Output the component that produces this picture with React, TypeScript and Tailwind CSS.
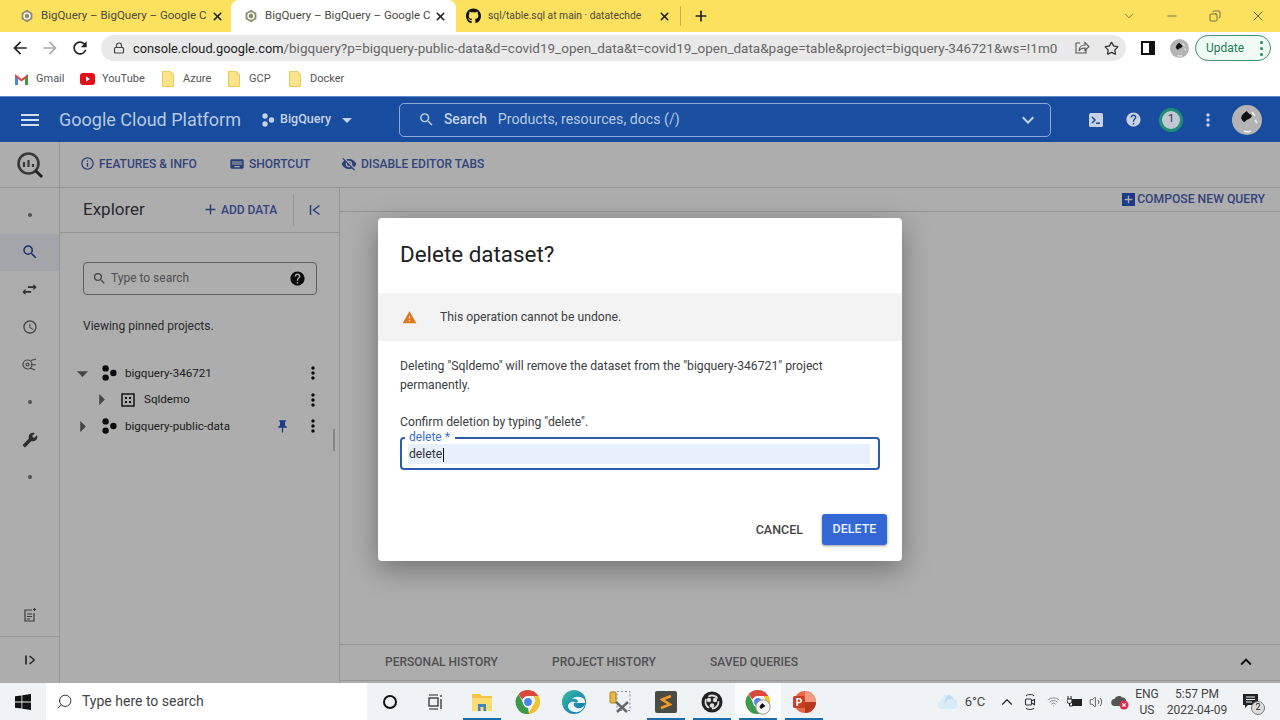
import type { ReactNode } from 'react'
import { ChevronDown, Minus, Plus, X, Copy, Search, Star, Lock, Volume2, Wifi } from 'lucide-react'
import { FaGithub } from 'react-icons/fa'
import {
  MdAdd,
  MdArrowBack,
  MdArrowDropDown,
  MdArrowForward,
  MdArrowRight,
  MdBuild,
  MdExpandLess,
  MdExpandMore,
  MdHelp,
  MdInfoOutline,
  MdKeyboard,
  MdMenu,
  MdMoreVert,
  MdPushPin,
  MdRefresh,
  MdSchedule,
  MdSearch,
  MdSwapHoriz,
  MdVisibilityOff,
  MdWarning,
} from 'react-icons/md'

function GcpFavicon() {
  return (
    <svg width="14" height="14" viewBox="0 0 14 14" className="shrink-0">
      <path d="M7 .8 12.4 3.9v6.2L7 13.2 1.6 10.1V3.9z" fill="#8a8a70" />
      <circle cx="7" cy="7" r="3" fill="none" stroke="#f4f4e8" strokeWidth="1.6" />
    </svg>
  )
}

function Tab({ active, icon, title, className }: { active?: boolean; icon: ReactNode; title: string; className: string }) {
  return (
    <div className={`flex h-8 items-center ${className} ${active ? 'rounded-t-lg bg-white' : ''}`}>
      <span className="flex w-[15px] justify-center">{icon}</span>
      <span className="ml-[7px] flex-1 whitespace-nowrap text-[#4a4a40]">{title}</span>
      <X size={13} strokeWidth={3} className="shrink-0 text-[#222]" />
    </div>
  )
}

function FolderIcon() {
  return (
    <svg width="12" height="16" viewBox="0 0 12 16" className="shrink-0">
      <path d="M.5.5h8l3 3v12H.5z" fill="#fbe38b" stroke="#e9c95a" />
      <path d="M8.5.5v3h3" fill="#f3d56f" />
    </svg>
  )
}

function Bookmark({ icon, label, width }: { icon: ReactNode; label: string; width: string }) {
  return (
    <div className={`flex items-center ${width}`}>
      <span className="flex w-[16px] justify-center">{icon}</span>
      <span className="ml-[7px] text-[11px] text-[#555]">{label}</span>
    </div>
  )
}

function Avatar({ size }: { size: number }) {
  return (
    <svg width={size} height={size} viewBox="0 0 30 30" className="shrink-0">
      <circle cx="15" cy="15" r="15" fill="#b4b4b4" />
      <path d="M9 13c1-4 4-6 6-7 1 3 4 3 5 5-2 4-6 3-7 6-2 0-3-2-4-4z" fill="#111" />
      <path d="M20 7l3 4M23 15l2 3M12 26c2 1 5 1 7 0" stroke="#eee" strokeWidth="1.6" fill="none" />
    </svg>
  )
}

function ToolbarLink({ icon, label, width }: { icon: ReactNode; label: string; width: string }) {
  return (
    <div className={`flex items-center ${width}`}>
      {icon}
      <span className="ml-[4px] whitespace-nowrap text-[12px] font-medium text-[#4a64b8]">{label}</span>
    </div>
  )
}

function RailIcon({ children, active }: { children: ReactNode; active?: boolean }) {
  return (
    <div className={`flex h-[37.5px] w-full items-center justify-center ${active ? 'bg-[#f0f4fb]' : ''}`}>{children}</div>
  )
}

function Dot() {
  return <span className="h-[4px] w-[4px] rounded-full bg-[#777]" />
}

function ProjectIcon() {
  return (
    <svg width="16" height="16" viewBox="0 0 16 16" className="shrink-0">
      <circle cx="4.6" cy="3.4" r="3.2" fill="#111" />
      <circle cx="4.6" cy="12.6" r="3.2" fill="#111" />
      <circle cx="12.4" cy="8" r="3.2" fill="#111" />
    </svg>
  )
}

function DatasetIcon() {
  return (
    <svg width="14" height="14" viewBox="0 0 14 14" className="shrink-0">
      <rect x="1" y="1" width="12" height="12" fill="none" stroke="#111" strokeWidth="1.4" />
      <rect x="4" y="4" width="2" height="2" fill="#111" />
      <rect x="8" y="4" width="2" height="2" fill="#111" />
      <rect x="4" y="8" width="2" height="2" fill="#111" />
      <rect x="8" y="8" width="2" height="2" fill="#111" />
    </svg>
  )
}

function TreeRow({ indent, open, icon, label, pinned }: { indent: string; open?: boolean; icon: ReactNode; label: string; pinned?: boolean }) {
  return (
    <div className={`flex h-[26.5px] items-center pr-[17px] ${indent}`}>
      <span className="flex w-[18px] justify-center text-[#666]">
        {open ? <MdArrowDropDown size={27} className="shrink-0" /> : <MdArrowRight size={27} className="shrink-0" />}
      </span>
      <span className="ml-[10px] flex w-[16px] justify-center">{icon}</span>
      <span className="ml-[8px] flex-1 text-[11.600px] text-[#2b2b2b]">{label}</span>
      {pinned && <MdPushPin size={15} className="mr-[13px] text-[#2a56c6]" />}
      <MdMoreVert size={20} className="-mr-[1px] text-[#111]" />
    </div>
  )
}

function TaskCell({ children, active, on }: { children: ReactNode; active?: boolean; on?: boolean }) {
  return (
    <div className={`relative flex h-full w-[46px] items-center justify-center ${active ? 'bg-[#fbfcfd]' : ''}`}>
      {children}
      {on && <span className="absolute bottom-0 left-[4px] right-[4px] h-[2px] bg-[#1b6ca8]" />}
    </div>
  )
}

function ChromeLogo({ user }: { user?: boolean }) {
  return (
    <svg width="26" height="26" viewBox="0 0 26 26">
      <path d="M13 1a12 12 0 0 1 10.4 6H13a6 6 0 0 0-5.6 3.8L3.6 5.2A12 12 0 0 1 13 1z" fill="#d9483b" />
      <path d="M23.4 7A12 12 0 0 1 13 25l5.2-9a6 6 0 0 0 0-9z" fill="#f2c230" />
      <path d="M3.6 5.2 8.8 15a5 5 0 0 0 4.2 4l1 6A12 12 0 0 1 3.6 5.2z" fill="#3c9a4b" />
      <circle cx="13" cy="13" r="4.6" fill="#4a85e8" stroke="#fff" strokeWidth="1.3" />
      {user && (
        <g>
          <circle cx="18" cy="18" r="7.2" fill="#f3f3f3" stroke="#999" />
          <path d="M14.5 18c.6-2 2-3.2 3.2-3.8.6 1.4 2 1.6 2.6 2.6-1 2-3 1.6-3.6 3-1 0-1.700-1-2.200-1.800z" fill="#111" />
        </g>
      )}
    </svg>
  )
}

export default function App() {
  return (
    <div className="flex h-[720px] w-[1280px] flex-col overflow-hidden bg-white font-['Roboto',sans-serif]">
      {/* tab strip */}
      <div className="flex h-8 shrink-0 items-center bg-[#fce15e]">
        <Tab icon={<GcpFavicon />} title="BigQuery – BigQuery – Google C" className="w-[231px] pl-[19px] pr-[7px] text-[11.500px]" />
        <Tab active icon={<GcpFavicon />} title="BigQuery – BigQuery – Google C" className="w-[225px] pl-[12px] pr-[9px] text-[11.500px]" />
        <Tab icon={<FaGithub size={16} className="text-[#111]" />} title="sql/table.sql at main · datatechde" className="w-[224px] pl-[10px] pr-[9px] text-[10.300px]" />
        <span className="h-5 w-px bg-[#c9b24e]" />
        <Plus size={16} strokeWidth={2.6} className="ml-[12px] text-[#222]" />
        <div className="ml-auto flex items-center text-[#444]">
          <span className="flex w-[43px] justify-center"><ChevronDown size={14} strokeWidth={1.2} /></span>
          <span className="flex w-[43px] justify-center"><Minus size={14} strokeWidth={1.2} /></span>
          <span className="flex w-[43px] justify-center"><Copy size={12} strokeWidth={1.4} className="-scale-x-100" /></span>
          <span className="flex w-[44px] justify-center"><X size={16} strokeWidth={1.2} /></span>
        </div>
      </div>

      {/* address bar */}
      <div className="flex h-8 shrink-0 items-center bg-white">
        <span className="flex w-[40px] justify-center"><MdArrowBack size={20} className="text-[#222]" /></span>
        <span className="-ml-[5px] flex w-[30px] justify-center"><MdArrowForward size={20} className="text-[#aaa]" /></span>
        <span className="flex w-[30px] justify-center"><MdRefresh size={20} className="text-[#222]" /></span>
        <div className="ml-[6px] flex h-[26px] w-[1025px] items-center rounded-full bg-[#e9e9e9] pl-[12px]">
          <Lock size={12} strokeWidth={2.4} className="text-[#444]" />
          <span className="ml-[8px] whitespace-nowrap pt-[1px] text-[13.500px] text-[#666]">
            <span className="text-[12.800px] text-[#222]">console.cloud.google.com</span>/bigquery?p=bigquery-public-data&amp;d=covid19_open_data&amp;t=covid19_open_data&amp;page=table&amp;project=bigquery-346721&amp;ws=!1m0
          </span>
          <svg width="16" height="16" viewBox="0 0 16 16" className="ml-auto shrink-0 text-[#555]" fill="none" stroke="currentColor" strokeWidth="1.100">
            <path d="M6 3H2v10h10V9M5 11c0-4 3-6 6-6V2.500L15 6.500l-4 4V8c-3 0-5 1-6 3z" />
          </svg>
          <Star size={15} className="ml-[14px] mr-[7px] text-[#333]" />
        </div>
        <svg width="14" height="14" viewBox="0 0 14 14" className="ml-[15px] shrink-0">
          <rect x="1" y="1" width="12" height="12" fill="#fff" stroke="#111" strokeWidth="2" />
          <rect x="8" y="1" width="5" height="12" fill="#111" />
        </svg>
        <span className="ml-[15px]"><Avatar size={19} /></span>
        <div className="ml-[6px] flex h-[26px] w-[76px] items-center rounded-full border border-[#3f9070] bg-[#effaf4] pl-[10px]">
          <span className="text-[12px] text-[#1f7a5a]">Update</span>
          <span className="ml-auto mr-[7px] flex flex-col gap-[3px]">
            <span className="h-[3px] w-[3px] rounded-full bg-[#1f8a5f]" />
            <span className="h-[3px] w-[3px] rounded-full bg-[#1f8a5f]" />
            <span className="h-[3px] w-[3px] rounded-full bg-[#1f8a5f]" />
          </span>
        </div>
      </div>

      {/* bookmarks */}
      <div className="flex h-8 shrink-0 items-center bg-white pb-[2px] pl-[13px]">
        <Bookmark
          width="w-[66px]"
          label="Gmail"
          icon={
            <svg width="15" height="12" viewBox="0 0 15 12">
              <path d="M1 12V1l6.500 5L14 1v11h-3V6L7.500 8.500 4 6v6z" fill="#d9483b" />
              <path d="M1 12V3l3 3v6z" fill="#4a85e8" />
              <path d="M14 12V3l-3 3v6z" fill="#3c9a4b" />
            </svg>
          }
        />
        <Bookmark
          width="w-[81px]"
          label="YouTube"
          icon={
            <svg width="15" height="12" viewBox="0 0 15 12">
              <rect width="15" height="12" rx="3" fill="#e3101c" />
              <path d="M6 3.500v5l4-2.500z" fill="#fff" />
            </svg>
          }
        />
        <Bookmark width="w-[66px]" label="Azure" icon={<FolderIcon />} />
        <Bookmark width="w-[61px]" label="GCP" icon={<FolderIcon />} />
        <Bookmark width="w-[60px]" label="Docker" icon={<FolderIcon />} />
      </div>

      {/* cloud console header */}
      <div className="flex h-[46px] shrink-0 items-center border-t border-[#5d8ac8] bg-[#174c9f] text-[#d5deee]">
        <MdMenu size={24} className="ml-[18px]" />
        <span className="ml-[17px] whitespace-nowrap text-[18px] text-[#b9c9e2]">Google Cloud Platform</span>
        <svg width="14" height="14" viewBox="0 0 14 14" className="ml-[20px] shrink-0" fill="#c5d0e2">
          <circle cx="4" cy="3" r="2.700" />
          <circle cx="4" cy="11" r="2.700" />
          <circle cx="10.500" cy="7" r="2.700" />
        </svg>
        <span className="ml-[5px] w-[53px] whitespace-nowrap text-[12.500px] font-medium text-[#c5d2e6]">BigQuery</span>
        <MdArrowDropDown size={24} className="ml-[2px] text-[#c5d2e6]" />
        <div className="ml-[40px] flex h-[34px] w-[652px] items-center rounded-[5px] border border-[#8daad6] bg-[#1a4fa1] pl-[18px]">
          <MdSearch size={17} className="text-[#c5d2e6]" />
          <span className="ml-[9px] text-[13.800px] font-medium text-[#c5d2e6]">Search</span>
          <span className="ml-[11px] text-[14.200px] text-[#b9c9e2]">Products, resources, docs (/)</span>
          <MdExpandMore size={24} className="ml-auto mr-[10px] text-[#c5d2e6]" />
        </div>
        <svg width="16" height="16" viewBox="0 0 16 16" className="ml-[37px] shrink-0">
          <rect x="1" y="1" width="14" height="14" rx="1.500" fill="#c8d2e2" />
          <path d="M4 5l3 3-3 3" fill="none" stroke="#174c9f" strokeWidth="1.500" />
          <path d="M8 11.200h4" stroke="#174c9f" strokeWidth="1.500" />
        </svg>
        <MdHelp size={17} className="ml-[21px] text-[#c8d2e2]" />
        <span className="ml-[17px] flex h-[24px] w-[24px] items-center justify-center rounded-full border-[3px] border-[#1f8f78] bg-[#c0c8d4] text-[11px] text-[#335]">1</span>
        <MdMoreVert size={20} className="ml-[15px] text-[#c8d2e2]" />
        <span className="ml-[14px]"><Avatar size={30} /></span>
      </div>

      {/* console body, dimmed by the modal */}
      <div className="relative flex min-h-0 flex-1 flex-col bg-white">
        <div className="flex h-[46px] shrink-0 border-b border-[#dcdcdc]">
          <div className="flex w-[60px] items-center justify-center border-r border-[#dcdcdc]">
            <svg width="28" height="28" viewBox="0 0 28 28">
              <circle cx="12.500" cy="12.500" r="10" fill="none" stroke="#555" strokeWidth="2.600" />
              <path d="M19.500 19.500 26 26" stroke="#333" strokeWidth="3" />
              <path d="M8 11v5M12.500 9v7M17 13v3" stroke="#555" strokeWidth="2.200" />
            </svg>
          </div>
          <div className="flex items-center pb-[2px] pl-[20px]">
            <ToolbarLink width="w-[149px]" label="FEATURES & INFO" icon={<MdInfoOutline size={15} className="text-[#3f5ab0]" />} />
            <ToolbarLink width="w-[112px]" label="SHORTCUT" icon={<MdKeyboard size={16} className="text-[#3f5ab0]" />} />
            <ToolbarLink width="w-[150px]" label="DISABLE EDITOR TABS" icon={<MdVisibilityOff size={16} className="text-[#3f5ab0]" />} />
          </div>
        </div>

        <div className="flex min-h-0 flex-1">
          {/* left rail */}
          <div className="flex w-[60px] shrink-0 flex-col border-r border-[#dcdcdc] pt-[8px]">
            <RailIcon><Dot /></RailIcon>
            <RailIcon active><MdSearch size={18} className="text-[#2f4a9c]" /></RailIcon>
            <RailIcon><MdSwapHoriz size={19} className="text-[#444]" /></RailIcon>
            <RailIcon><MdSchedule size={16} className="text-[#666]" /></RailIcon>
            <RailIcon>
              <svg width="15" height="13" viewBox="0 0 15 13" fill="none" stroke="#666" strokeWidth="1.200">
                <circle cx="5.500" cy="6.500" r="4.500" />
                <circle cx="5.500" cy="6.500" r="1.500" />
                <path d="M9 2.500 14 1M9 6.500l5 .5M8 10l5 2" />
              </svg>
            </RailIcon>
            <RailIcon><Dot /></RailIcon>
            <RailIcon><MdBuild size={16} className="-scale-x-100 text-[#444]" /></RailIcon>
            <RailIcon><Dot /></RailIcon>
            <div className="mt-auto flex h-[44px] items-center justify-center border-b border-[#dcdcdc]">
              <svg width="14" height="15" viewBox="0 0 14 15" fill="none" stroke="#555" strokeWidth="1.200">
                <path d="M9 3H2v11h9V6" />
                <path d="M4 7h5M4 9.500h5M4 12h3" />
                <path d="M11.500 1v3M10 2.500h3" />
              </svg>
            </div>
            <div className="flex h-[46px] items-center justify-center">
              <svg width="12" height="12" viewBox="0 0 12 12" fill="none" stroke="#333" strokeWidth="1.600">
                <path d="M2 1.500v9M10.500 6 5.500 2M10.500 6l-5 4" />
              </svg>
            </div>
          </div>

          {/* explorer */}
          <div className="relative flex w-[280px] shrink-0 flex-col border-r border-[#dcdcdc]">
            <div className="flex h-[45px] shrink-0 items-center border-b border-[#dcdcdc] pb-[1px] pl-[23px]">
              <span className="w-[61px] whitespace-nowrap text-[17px] text-[#3c4043]">Explorer</span>
              <MdAdd size={17} className="ml-[58px] text-[#3f5ab0]" />
              <span className="ml-[2px] text-[12px] font-medium text-[#4a64b8]">ADD DATA</span>
              <span className="ml-[16px] h-[32px] w-px bg-[#dcdcdc]" />
              <svg width="12" height="12" viewBox="0 0 12 12" fill="none" stroke="#3f5ab0" strokeWidth="1.500" className="ml-[15px]">
                <path d="M1.500 1v10M10.500 1.500 4.500 6l6 4.500" />
              </svg>
            </div>
            <div className="ml-[23px] mt-[29px] flex h-[33px] w-[234px] items-center rounded-[4px] border border-[#8a8a8a] pl-[8px] pr-[10px]">
              <MdSearch size={15} className="text-[#666]" />
              <span className="ml-[4px] flex-1 pb-[1px] text-[12px] text-[#777]">Type to search</span>
              <MdHelp size={17} className="text-[#111]" />
            </div>
            <p className="ml-[23px] mt-[22px] text-[12px] text-[#3c4043]">Viewing pinned projects.</p>
            <div className="mt-[25px]">
              <TreeRow indent="pl-[13px]" open icon={<ProjectIcon />} label="bigquery-346721" />
              <TreeRow indent="pl-[32px]" icon={<DatasetIcon />} label="Sqldemo" />
              <TreeRow indent="pl-[13px]" icon={<ProjectIcon />} label="bigquery-public-data" pinned />
            </div>
            <span className="absolute right-[4px] top-[241px] h-[22px] w-[2px] bg-[#c8c8c8]" />
          </div>

          {/* query area */}
          <div className="flex min-w-0 flex-1 flex-col">
            <div className="flex h-[24px] shrink-0 items-center justify-end border-b border-[#dcdcdc] pr-[15px]">
              <span className="flex h-[13px] w-[13px] items-center justify-center bg-[#2a56c6]">
                <Plus size={11} strokeWidth={3} className="text-white" />
              </span>
              <span className="ml-[2px] text-[12.200px] font-medium text-[#4a64b8]">COMPOSE NEW QUERY</span>
            </div>
            <div className="mt-auto flex h-[36px] items-center border-t border-[#dcdcdc] pb-[2px] pl-[45px] text-[12px] font-medium text-[#777]">
              <span className="w-[167px]">PERSONAL HISTORY</span>
              <span className="w-[158px]">PROJECT HISTORY</span>
              <span>SAVED QUERIES</span>
              <MdExpandLess size={22} className="ml-auto mr-[23px] text-[#111]" />
            </div>
            <div className="h-[3px] border-t border-[#dcdcdc]" />
          </div>
        </div>

        {/* modal */}
        <div className="absolute inset-0 flex items-start justify-center bg-black/32 pt-[76px]">
          <div className="w-[524px] rounded-[4px] bg-white shadow-[0_8px_28px_rgba(0,0,0,0.35)]">
            <h2 className="flex h-[75px] items-center pb-[2px] pl-[22px] text-[22.400px] text-[#202124]">Delete dataset?</h2>
            <div className="flex h-[48px] items-center bg-[#f3f3f3] pl-[24px]">
              <MdWarning size={15} className="text-[#e0761c]" />
              <span className="ml-[23px] text-[12.200px] text-[#3c4043]">This operation cannot be undone.</span>
            </div>
            <div className="px-[22px] pt-[16px]">
              <p className="text-[12.200px] leading-[19px] text-[#3c4043]">
                Deleting "Sqldemo" will remove the dataset from the "bigquery-346721" project permanently.
              </p>
              <p className="mt-[18px] text-[12.200px] leading-[19px] text-[#3c4043]">Confirm deletion by typing "delete".</p>
              <div className="relative mt-[5px] flex h-[33px] w-[480px] items-center rounded-[4px] border-2 border-[#2d5bb0] pl-[6px] pr-[8px]">
                <span className="absolute -top-[9px] left-[3px] bg-white pl-[4px] pr-[5px] text-[12px] leading-[14px] text-[#3a6fd0]">delete *</span>
                <div className="flex h-[20px] flex-1 items-center bg-[#e8f0fe] pl-[1px] pt-[2px] text-[12.200px] text-[#333]">
                  delete<span className="ml-[1px] h-[14px] w-px bg-[#111]" />
                </div>
              </div>
            </div>
            <div className="flex items-center justify-end pb-[16px] pr-[15px] pt-[44px]">
              <span className="mr-[19px] pt-[1px] text-[12.500px] font-medium text-[#444]">CANCEL</span>
              <span className="flex h-[31px] w-[65px] items-center justify-center rounded-[3px] bg-[#3367d6] text-[12.500px] font-medium text-[#e8f0fe] shadow-[0_1px_3px_rgba(0,0,0,0.4)]">DELETE</span>
            </div>
          </div>
        </div>
      </div>

      {/* windows taskbar */}
      <div className="flex h-[37px] shrink-0 items-center bg-[#f0f3f5]">
        <div className="flex h-full w-[46px] items-center justify-center">
          <svg width="16" height="16" viewBox="0 0 16 16" fill="#111">
            <path d="M0 2.300 6.500 1.400v6.200H0zM7.300 1.300 16 0v7.600H7.300zM0 8.400h6.500v6.200L0 13.700zM7.300 8.400H16V16l-8.700-1.300z" />
          </svg>
        </div>
        <div className="flex h-full w-[321px] items-center bg-white pl-[10px]">
          <Search size={17} strokeWidth={1.300} className="-scale-x-100 text-[#222]" />
          <span className="ml-[9px] text-[14px] text-[#444]">Type here to search</span>
        </div>
        <TaskCell><span className="h-[14px] w-[14px] rounded-full border-2 border-[#111]" /></TaskCell>
        <TaskCell>
          <svg width="16" height="16" viewBox="0 0 16 16" fill="none" stroke="#222" strokeWidth="1.200">
            <path d="M1 1h9M1 15h9" />
            <rect x="1" y="4" width="9" height="8" />
            <path d="M13 1v2M13 5v10" />
          </svg>
        </TaskCell>
        <TaskCell on>
          <svg width="20" height="18" viewBox="0 0 20 18">
            <path d="M0 1h8l2 2h10v4H0z" fill="#f6c544" />
            <rect y="5" width="20" height="13" fill="#fbdc74" />
            <path d="M6 18v-7h8v7h-2.500v-4h-3v4z" fill="#3d87b8" />
          </svg>
        </TaskCell>
        <TaskCell><ChromeLogo /></TaskCell>
        <TaskCell>
          <svg width="24" height="24" viewBox="0 0 24 24">
            <defs>
              <linearGradient id="edgeFill" x1="0" y1="0" x2="1" y2="1">
                <stop offset="0" stopColor="#39c0a0" />
                <stop offset="1" stopColor="#0f6bb8" />
              </linearGradient>
            </defs>
            <circle cx="12" cy="12" r="12" fill="url(#edgeFill)" />
            <path d="M23 14c-1 3-5 5-8 4-3-1-4-3-3-5 1-1 3-1 4 0h7c0-2 0-3-1-4-3-3-9-3-12 0 3-1 6 0 6 3h-3c-4-1-7 1-7 4 0 4 5 7 10 6 4-1 6-4 7-8z" fill="#eaf5f8" />
          </svg>
        </TaskCell>
        <TaskCell>
          <svg width="24" height="24" viewBox="0 0 24 24" fill="none">
            <rect x="2" y="2" width="6" height="11" rx="1" fill="#e8b93a" stroke="#9c8230" />
            <rect x="9" y="1.500" width="13" height="19" stroke="#88a" strokeDasharray="2 2" />
            <path d="M8 12l11 10M20 12 9 22" stroke="#666" strokeWidth="2.400" />
          </svg>
        </TaskCell>
        <TaskCell on>
          <span className="flex h-[22px] w-[22px] items-center justify-center rounded-[2px] bg-[#4b4b45]">
            <svg width="12" height="16" viewBox="0 0 12 16" fill="none" stroke="#f59a23" strokeWidth="2.600">
              <path d="M11 2 2 5.500l8 5L1 14" />
            </svg>
          </span>
        </TaskCell>
        <TaskCell on>
          <svg width="22" height="22" viewBox="0 0 22 22">
            <circle cx="11" cy="11" r="10.500" fill="#222" />
            <circle cx="11" cy="11" r="6.500" fill="none" stroke="#ddd" strokeWidth="1.800" strokeDasharray="10 3" />
            <circle cx="8" cy="9" r="2.200" fill="#ddd" />
            <circle cx="14" cy="9" r="2.200" fill="#ddd" />
            <circle cx="11" cy="14.500" r="2.200" fill="#ddd" />
          </svg>
        </TaskCell>
        <TaskCell active on><ChromeLogo user /></TaskCell>
        <TaskCell on>
          <svg width="24" height="24" viewBox="0 0 24 24">
            <circle cx="13" cy="12" r="11" fill="#e8664a" />
            <path d="M13 1a11 11 0 0 1 11 11H13z" fill="#f19a7e" />
            <path d="M13 12h11a11 11 0 0 1-11 11z" fill="#b8391f" />
            <rect x="1" y="6" width="12" height="12" rx="1.500" fill="#c63f23" />
            <text x="7" y="16" textAnchor="middle" fontSize="10" fontWeight="700" fill="#fff" fontFamily="Roboto, sans-serif">P</text>
          </svg>
        </TaskCell>

        <div className="ml-auto flex h-full items-center text-[#444]">
          <span className="flex w-[28px] justify-center">
            <svg width="22" height="18" viewBox="0 0 22 18">
              <path d="M5 16a4.500 4.500 0 0 1-1-8.800C5 3 9 1 12 2c3 1 4 2 4 4 4 0 5.500 3 5 6-.5 3-3 4-5 4z" fill="#d8ebf9" />
              <path d="M12 2c3 1 4 2 4 4-4-1-7 1-8 5-1-4 1-8 4-9z" fill="#bcdcf2" />
            </svg>
          </span>
          <span className="w-[26px] text-center text-[13px]">6°C</span>
          <span className="ml-[8px] flex w-[22px] justify-center"><ChevronDown size={18} strokeWidth={1.500} className="rotate-180 text-[#222]" /></span>
          <span className="ml-[1px] flex w-[22px] justify-center">
            <svg width="12" height="18" viewBox="0 0 12 18" fill="none" stroke="#333" strokeWidth="1.100">
              <path d="M2 3c1-2 7-2 8 0M2 15c1 2 7 2 8 0" />
              <rect x="1.500" y="6" width="6" height="6" rx="1" />
              <path d="M7.500 8l3-1.500v5l-3-1.500" />
            </svg>
          </span>
          <span className="ml-[1px] flex w-[22px] justify-center"><Wifi size={13} strokeWidth={1.500} className="text-[#777]" /></span>
          <span className="flex w-[22px] justify-center">
            <svg width="16" height="12" viewBox="0 0 16 12">
              <rect x="5" y="3" width="10" height="7" fill="#222" />
              <path d="M1 0v3M4 0v3M0 3h5v2a2 2 0 0 1-5 0zM2.500 7v3h3" stroke="#222" fill="none" />
            </svg>
          </span>
          <span className="flex w-[20px] justify-center"><Volume2 size={14} strokeWidth={1.300} className="text-[#333]" /></span>
          <span className="relative ml-[2px] flex w-[24px] justify-center">
            <svg width="18" height="16" viewBox="0 0 18 16">
              <path d="M4 12a3.500 3.500 0 0 1-.5-7C5 2 9 1 11 3.500c3 0 4.500 2 4 4v4.500z" fill="#555" />
              <circle cx="13" cy="11" r="4.500" fill="#d92d4a" />
              <path d="M11.300 9.300l3.400 3.400M14.700 9.300l-3.400 3.400" stroke="#fff" strokeWidth="1.200" />
            </svg>
          </span>
          <div className="flex w-[30px] flex-col items-center text-[12px] leading-[16px]">
            <span>ENG</span>
            <span>US</span>
          </div>
          <div className="flex w-[70px] flex-col items-center text-[12px] leading-[16px]">
            <span>5:57 PM</span>
            <span>2022-04-09</span>
          </div>
          <span className="relative mr-[12px] flex w-[36px] justify-center">
            <svg width="15" height="15" viewBox="0 0 15 15">
              <path d="M0 0h15v11H5l-3 3v-3H0z" fill="#222" />
              <path d="M3 3h9M3 5.500h9M3 8h6" stroke="#f0f3f5" />
            </svg>
            <span className="absolute left-[19px] top-[7px] flex h-[14px] w-[14px] items-center justify-center rounded-full border border-[#777] bg-[#ddd] text-[9px] text-[#222]">2</span>
          </span>
        </div>
      </div>
    </div>
  )
}
